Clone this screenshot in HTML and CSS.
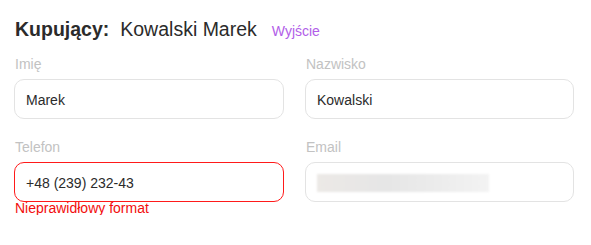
FILE: index.html
```html
<!DOCTYPE html>
<html lang="pl">
<head>
<meta charset="utf-8">
<link rel="stylesheet" href="styles.css">
</head>
<body>
<div class="form">
  <div class="header">
    <span class="title">Kupujący:</span>
    <span class="name">Kowalski Marek</span>
    <a class="logout">Wyjście</a>
  </div>
  <div class="grid">
    <div class="field">
      <div class="label">Imię</div>
      <div class="input">Marek</div>
    </div>
    <div class="field">
      <div class="label">Nazwisko</div>
      <div class="input">Kowalski</div>
    </div>
    <div class="field">
      <div class="label">Telefon</div>
      <div class="input error">+48 (239) 232-43</div>
      <div class="error-text">Nieprawidłowy format</div>
    </div>
    <div class="field">
      <div class="label">Email</div>
      <div class="input"><div class="blurred"></div></div>
    </div>
  </div>
</div>
</body>
</html>
```
FILE: styles.css
```css
* { box-sizing: border-box; }
body {
  margin: 0;
  background: #fff;
  font-family: "Liberation Sans", Arial, sans-serif;
  color: #333;
}
.form {
  width: 574px;
  padding: 18px 0 0 14px;
}
.header {
  display: flex;
  align-items: baseline;
  height: 23px;
  line-height: 23px;
  padding-left: 1px;
}
.title {
  font-size: 19.5px;
  font-weight: bold;
  color: #2b2b2b;
}
.name {
  font-size: 19.5px;
  margin-left: 11px;
  color: #2b2b2b;
}
.logout {
  font-size: 14px;
  line-height: 16px;
  color: #b25ee8;
  margin-left: 15px;
}
.grid {
  display: grid;
  grid-template-columns: 270px 269px;
  column-gap: 21px;
  row-gap: 20px;
  margin-top: 15px;
}
.label {
  font-size: 14px;
  line-height: 16px;
  color: #c2c2c2;
  padding-left: 1px;
  margin-bottom: 7px;
}
.input {
  height: 40px;
  border: 1px solid #e3e3e3;
  border-radius: 10px;
  padding: 0 11px;
  display: flex;
  align-items: center;
  font-size: 14px;
  color: #2b2b2b;
  padding-top: 1px;
}
.input.error {
  border-color: #ff1a1a;
}
.error-text {
  font-size: 14px;
  line-height: 13px;
  color: #f20d0d;
  padding-left: 1px;
}
.blurred {
  width: 172px;
  height: 18px;
  background: linear-gradient(90deg, #ece9e6, #e6e6e6 40%, #ececec 70%, #f3f3f3);
  filter: blur(1px);
}
```
